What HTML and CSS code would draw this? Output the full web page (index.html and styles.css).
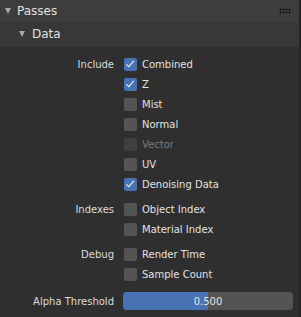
FILE: index.html
```html
<!DOCTYPE html>
<html lang="en">
<head>
  <meta charset="UTF-8">
  <title>Passes</title>
  <link rel="stylesheet" href="styles.css">
</head>
<body>
  <div class="panel">
    <div class="panel-header">
      <span class="arrow"></span>
      <span class="title">Passes</span>
      <span class="grip"></span>
    </div>
    <div class="sub-header">
      <span class="arrow"></span>
      <span class="title">Data</span>
    </div>

    <div class="body">
      <div class="group">
        <div class="row"><span class="label">Include</span><span class="check on"></span><span class="text">Combined</span></div>
        <div class="row"><span class="label"></span><span class="check on"></span><span class="text">Z</span></div>
        <div class="row"><span class="label"></span><span class="check"></span><span class="text">Mist</span></div>
        <div class="row"><span class="label"></span><span class="check"></span><span class="text">Normal</span></div>
        <div class="row disabled"><span class="label"></span><span class="check"></span><span class="text">Vector</span></div>
        <div class="row"><span class="label"></span><span class="check"></span><span class="text">UV</span></div>
        <div class="row"><span class="label"></span><span class="check on"></span><span class="text">Denoising Data</span></div>
      </div>
      <div class="group">
        <div class="row"><span class="label">Indexes</span><span class="check"></span><span class="text">Object Index</span></div>
        <div class="row"><span class="label"></span><span class="check"></span><span class="text">Material Index</span></div>
      </div>
      <div class="group">
        <div class="row"><span class="label">Debug</span><span class="check"></span><span class="text">Render Time</span></div>
        <div class="row"><span class="label"></span><span class="check"></span><span class="text">Sample Count</span></div>
      </div>
      <div class="group">
        <div class="row slider-row">
          <span class="label">Alpha Threshold</span>
          <div class="slider">
            <div class="fill" style="width: 50%"></div>
            <span class="value">0.500</span>
          </div>
        </div>
      </div>
    </div>
  </div>
</body>
</html>
```

FILE: styles.css
```css
body {
  margin: 0;
  background: #232323;
  font-family: 'DejaVu Sans', sans-serif;
  color: #e6e6e6;
}
.panel {
  width: 299px;
  height: 317px;
  background: #2f2f2f;
  overflow: hidden;
}

/* Headers */
.panel-header {
  height: 22px;
  background: #3d3d3d;
  display: flex;
  align-items: center;
  padding-left: 5px;
}
.panel-header .title {
  font-size: 12px;
  margin-left: 6px;
  color: #e0e0e0;
}
.grip {
  margin-left: auto;
  margin-right: 8px;
  width: 12px;
  height: 6px;
  background-image: radial-gradient(circle, #111 0.9px, transparent 1.1px);
  background-size: 3px 3px;
}
.sub-header {
  height: 24px;
  background: #383838;
  display: flex;
  align-items: center;
  padding-left: 19px;
  border-bottom: 1px solid #333;
}
.sub-header .title {
  font-size: 12px;
  margin-left: 7px;
  color: #e0e0e0;
}
.arrow {
  width: 0;
  height: 0;
  border-left: 3.5px solid transparent;
  border-right: 3.5px solid transparent;
  border-top: 6px solid #a8a8a8;
}

/* Rows */
.body {
  padding-top: 7px;
}
.group {
  margin-bottom: 5px;
}
.row {
  height: 20px;
  display: flex;
  align-items: center;
  font-size: 10px;
}
.label {
  width: 114px;
  text-align: right;
  color: #dcdcdc;
  flex-shrink: 0;
}
.check {
  width: 13px;
  height: 13px;
  border-radius: 2px;
  background: #545454;
  margin-left: 10px;
  margin-right: 5px;
  position: relative;
}
.check.on {
  background: #4772b3;
}
.check.on::after {
  content: '';
  position: absolute;
  left: 4px;
  top: 1px;
  width: 3px;
  height: 7px;
  border-right: 1.6px solid #fff;
  border-bottom: 1.6px solid #fff;
  transform: rotate(40deg);
}
.text {
  color: #e2e2e2;
}
.row.disabled .check {
  background: #3f3f3f;
}
.row.disabled .text {
  color: #7a7a7a;
}

/* Slider */
.slider-row {
  height: 24px;
}
.slider {
  margin-left: 9px;
  width: 170px;
  height: 18px;
  border-radius: 4px;
  background: #545454;
  position: relative;
  overflow: hidden;
  display: flex;
  align-items: center;
  justify-content: center;
}
.fill {
  position: absolute;
  left: 0;
  top: 0;
  bottom: 0;
  background: #4772b3;
}
.value {
  position: relative;
  color: #e6e6e6;
}
```
